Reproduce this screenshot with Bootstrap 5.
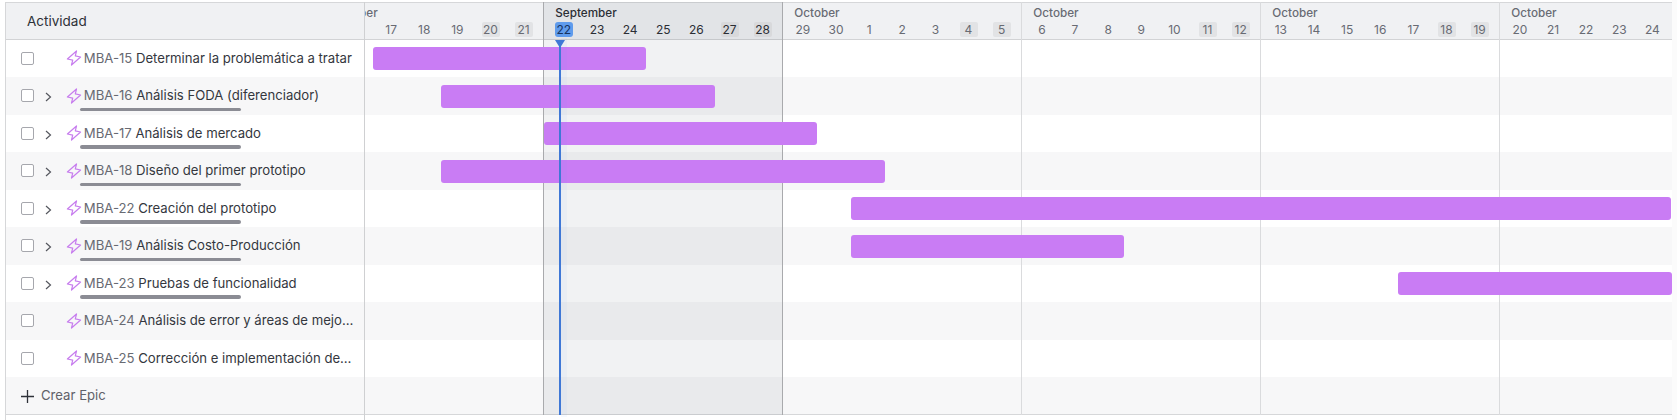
<!DOCTYPE html>
<html lang="es">
<head>
  <meta charset="UTF-8" />
  <meta name="viewport" content="width=device-width, initial-scale=1.0" />
  <title>Cronograma</title>
  <link href="https://cdn.jsdelivr.net/npm/bootstrap@5.3.0/dist/css/bootstrap.min.css" rel="stylesheet" />
  <style>
    body { background: #fff; font-family: "Inter", "Liberation Sans", sans-serif; overflow: hidden; }
    .gantt { margin: 2px 0 0 5px; width: 1667px; height: 418px; overflow: hidden; }
    .gantt-side { width: 360px; flex: none; border-left: 1px solid #d6d7d9; border-right: 1px solid #cfd0d2; }
    .gantt-head { height: 37.5px; background: #f0f1f3; border-top: 1px solid #d6d7d9; border-bottom: 1px solid #d2d3d5; }
    .side-title { font-size: 13.5px; color: #2e3138; padding-left: 21px; font-weight: 400; }
    .gantt-row { height: 37.5px; position: relative; }
    .gantt-row svg { flex: none; }
    .gantt-row.alt { background: #f7f7f8; }
    .gantt-row.last { border-bottom: 1px solid #d6d7d9; }
    .task-check.form-check-input { width: 13px; height: 13px; margin: 0 0 0 15px; flex: none; border: 1.5px solid #a6a7ad; border-radius: 2px; background-color: #fff; }
    .task-toggle { width: 32px; flex: none; padding-left: 11px; }
    .task-label { font-size: 13.15px; color: #34373e; padding: 1px 10px 0 1.8px; }
    .task-key { color: #686a72; }
    .task-progress { position: absolute; left: 74px; width: 161px; bottom: 3.5px; height: 3.5px; border-radius: 2px; background: #8b8c94; }
    .add-epic { font-size: 13.15px; color: #5f6169; padding: 2px 0 0 15px; gap: 7px; }
    .gantt-chart { flex: 1 1 0; min-width: 0; overflow: hidden; }
    .gantt-track { position: relative; width: 1434px; margin-left: -60.7px; }
    .week-head { width: 239px; flex: none; position: relative; z-index: 2; padding-left: 4px; color: #686b73; }
    .week-head.now { color: #2b2e35; }
    .week-month { font-size: 11.7px; font-weight: 500; line-height: 15px; padding: 2.5px 0 0 8px; white-space: nowrap; }
    .week-days { display: flex; margin-top: 1px; }
    .day-cell { width: 33.14px; flex: none; display: flex; justify-content: center; font-size: 12px; line-height: 15px; }
    .day-num { min-width: 18px; text-align: center; border-radius: 2px; }
    .day-num.off { background: #e2e3e5; }
    .now .day-num.off { background: #d8d9db; }
    .day-num.today { background: #5f9bec; color: #16325f; border-radius: 3px; }
    .week-lines { position: absolute; inset: 0; z-index: 1; pointer-events: none; }
    .week-line { width: 239px; flex: none; border-left: 1px solid #dadbdd; }
    .week-line.now { background: rgba(9, 30, 50, .06); border-left-color: #a9aaad; }
    .week-line.now + .week-line { border-left-color: #a9aaad; }
    .gantt-bar { position: absolute; top: 7.5px; height: 23px; border-radius: 3px; background: #c97cf4; z-index: 2; }
    .today-line { position: absolute; top: 37.5px; bottom: 0; left: 255px; width: 2px; background: #3f78d6; box-shadow: 4px 0 0 2px rgba(90, 160, 255, .05); z-index: 3; }
    .today-line::before { content: ""; position: absolute; top: 0; left: -4px; border: 5px solid transparent; border-top: 8px solid #3f78d6; border-bottom: 0; }
    .edge-strip { position: fixed; top: 0; right: 0; bottom: 0; width: 5px; background: #fbfbfb; }
  </style>
</head>
<body>
  <div class="gantt d-flex">
    <!-- Lista de actividades -->
    <div class="gantt-side">
      <div class="gantt-head d-flex align-items-center"><span class="side-title">Actividad</span></div>

      <div class="gantt-row d-flex align-items-center">
        <input class="form-check-input task-check" type="checkbox" />
        <span class="task-toggle"></span>
        <svg width="16" height="16" viewBox="0 0 16 16" fill="none" stroke="#c77dee" stroke-width="1.2" stroke-linejoin="round"><path d="M10.5 1 9.3 5.9 14.6 7 5.5 15 6.7 10.1 1.4 9Z"/></svg>
        <span class="task-label text-truncate"><span class="task-key">MBA-15</span> Determinar la problemática a tratar</span>
      </div>

      <div class="gantt-row alt d-flex align-items-center">
        <input class="form-check-input task-check" type="checkbox" />
        <span class="task-toggle"><svg width="7" height="10" viewBox="0 0 7 10" fill="none" stroke="#55575e" stroke-width="1.2"><path d="M1 1l4.5 4L1 9"/></svg></span>
        <svg width="16" height="16" viewBox="0 0 16 16" fill="none" stroke="#c77dee" stroke-width="1.2" stroke-linejoin="round"><path d="M10.5 1 9.3 5.9 14.6 7 5.5 15 6.7 10.1 1.4 9Z"/></svg>
        <span class="task-label text-truncate"><span class="task-key">MBA-16</span> Análisis FODA (diferenciador)</span>
        <span class="task-progress"></span>
      </div>

      <div class="gantt-row d-flex align-items-center">
        <input class="form-check-input task-check" type="checkbox" />
        <span class="task-toggle"><svg width="7" height="10" viewBox="0 0 7 10" fill="none" stroke="#55575e" stroke-width="1.2"><path d="M1 1l4.5 4L1 9"/></svg></span>
        <svg width="16" height="16" viewBox="0 0 16 16" fill="none" stroke="#c77dee" stroke-width="1.2" stroke-linejoin="round"><path d="M10.5 1 9.3 5.9 14.6 7 5.5 15 6.7 10.1 1.4 9Z"/></svg>
        <span class="task-label text-truncate"><span class="task-key">MBA-17</span> Análisis de mercado</span>
        <span class="task-progress"></span>
      </div>

      <div class="gantt-row alt d-flex align-items-center">
        <input class="form-check-input task-check" type="checkbox" />
        <span class="task-toggle"><svg width="7" height="10" viewBox="0 0 7 10" fill="none" stroke="#55575e" stroke-width="1.2"><path d="M1 1l4.5 4L1 9"/></svg></span>
        <svg width="16" height="16" viewBox="0 0 16 16" fill="none" stroke="#c77dee" stroke-width="1.2" stroke-linejoin="round"><path d="M10.5 1 9.3 5.9 14.6 7 5.5 15 6.7 10.1 1.4 9Z"/></svg>
        <span class="task-label text-truncate"><span class="task-key">MBA-18</span> Diseño del primer prototipo</span>
        <span class="task-progress"></span>
      </div>

      <div class="gantt-row d-flex align-items-center">
        <input class="form-check-input task-check" type="checkbox" />
        <span class="task-toggle"><svg width="7" height="10" viewBox="0 0 7 10" fill="none" stroke="#55575e" stroke-width="1.2"><path d="M1 1l4.5 4L1 9"/></svg></span>
        <svg width="16" height="16" viewBox="0 0 16 16" fill="none" stroke="#c77dee" stroke-width="1.2" stroke-linejoin="round"><path d="M10.5 1 9.3 5.9 14.6 7 5.5 15 6.7 10.1 1.4 9Z"/></svg>
        <span class="task-label text-truncate"><span class="task-key">MBA-22</span> Creación del prototipo</span>
        <span class="task-progress"></span>
      </div>

      <div class="gantt-row alt d-flex align-items-center">
        <input class="form-check-input task-check" type="checkbox" />
        <span class="task-toggle"><svg width="7" height="10" viewBox="0 0 7 10" fill="none" stroke="#55575e" stroke-width="1.2"><path d="M1 1l4.5 4L1 9"/></svg></span>
        <svg width="16" height="16" viewBox="0 0 16 16" fill="none" stroke="#c77dee" stroke-width="1.2" stroke-linejoin="round"><path d="M10.5 1 9.3 5.9 14.6 7 5.5 15 6.7 10.1 1.4 9Z"/></svg>
        <span class="task-label text-truncate"><span class="task-key">MBA-19</span> Análisis Costo-Producción</span>
        <span class="task-progress"></span>
      </div>

      <div class="gantt-row d-flex align-items-center">
        <input class="form-check-input task-check" type="checkbox" />
        <span class="task-toggle"><svg width="7" height="10" viewBox="0 0 7 10" fill="none" stroke="#55575e" stroke-width="1.2"><path d="M1 1l4.5 4L1 9"/></svg></span>
        <svg width="16" height="16" viewBox="0 0 16 16" fill="none" stroke="#c77dee" stroke-width="1.2" stroke-linejoin="round"><path d="M10.5 1 9.3 5.9 14.6 7 5.5 15 6.7 10.1 1.4 9Z"/></svg>
        <span class="task-label text-truncate"><span class="task-key">MBA-23</span> Pruebas de funcionalidad</span>
        <span class="task-progress"></span>
      </div>

      <div class="gantt-row alt d-flex align-items-center">
        <input class="form-check-input task-check" type="checkbox" />
        <span class="task-toggle"></span>
        <svg width="16" height="16" viewBox="0 0 16 16" fill="none" stroke="#c77dee" stroke-width="1.2" stroke-linejoin="round"><path d="M10.5 1 9.3 5.9 14.6 7 5.5 15 6.7 10.1 1.4 9Z"/></svg>
        <span class="task-label text-truncate"><span class="task-key">MBA-24</span> Análisis de error y áreas de mejora</span>
      </div>

      <div class="gantt-row d-flex align-items-center">
        <input class="form-check-input task-check" type="checkbox" />
        <span class="task-toggle"></span>
        <svg width="16" height="16" viewBox="0 0 16 16" fill="none" stroke="#c77dee" stroke-width="1.2" stroke-linejoin="round"><path d="M10.5 1 9.3 5.9 14.6 7 5.5 15 6.7 10.1 1.4 9Z"/></svg>
        <span class="task-label text-truncate"><span class="task-key">MBA-25</span> Corrección e implementación de mejoras</span>
      </div>

      <div class="gantt-row alt last d-flex align-items-center add-epic">
        <svg width="13" height="13" viewBox="0 0 13 13" stroke="#2e3138" stroke-width="1.3"><path d="M6.5 0v13M0 6.5h13"/></svg>
        <span>Crear Epic</span>
      </div>
    </div>

    <!-- Cronograma -->
    <div class="gantt-chart">
      <div class="gantt-track">
        <div class="gantt-head d-flex">
          <div class="week-head">
            <div class="week-month">September</div>
            <div class="week-days"><span class="day-cell"></span><span class="day-cell"><span class="day-num">16</span></span><span class="day-cell"><span class="day-num">17</span></span><span class="day-cell"><span class="day-num">18</span></span><span class="day-cell"><span class="day-num">19</span></span><span class="day-cell"><span class="day-num off">20</span></span><span class="day-cell"><span class="day-num off">21</span></span></div>
          </div>
          <div class="week-head now">
            <div class="week-month">September</div>
            <div class="week-days"><span class="day-cell"><span class="day-num today">22</span></span><span class="day-cell"><span class="day-num">23</span></span><span class="day-cell"><span class="day-num">24</span></span><span class="day-cell"><span class="day-num">25</span></span><span class="day-cell"><span class="day-num">26</span></span><span class="day-cell"><span class="day-num off">27</span></span><span class="day-cell"><span class="day-num off">28</span></span></div>
          </div>
          <div class="week-head">
            <div class="week-month">October</div>
            <div class="week-days"><span class="day-cell"><span class="day-num">29</span></span><span class="day-cell"><span class="day-num">30</span></span><span class="day-cell"><span class="day-num">1</span></span><span class="day-cell"><span class="day-num">2</span></span><span class="day-cell"><span class="day-num">3</span></span><span class="day-cell"><span class="day-num off">4</span></span><span class="day-cell"><span class="day-num off">5</span></span></div>
          </div>
          <div class="week-head">
            <div class="week-month">October</div>
            <div class="week-days"><span class="day-cell"><span class="day-num">6</span></span><span class="day-cell"><span class="day-num">7</span></span><span class="day-cell"><span class="day-num">8</span></span><span class="day-cell"><span class="day-num">9</span></span><span class="day-cell"><span class="day-num">10</span></span><span class="day-cell"><span class="day-num off">11</span></span><span class="day-cell"><span class="day-num off">12</span></span></div>
          </div>
          <div class="week-head">
            <div class="week-month">October</div>
            <div class="week-days"><span class="day-cell"><span class="day-num">13</span></span><span class="day-cell"><span class="day-num">14</span></span><span class="day-cell"><span class="day-num">15</span></span><span class="day-cell"><span class="day-num">16</span></span><span class="day-cell"><span class="day-num">17</span></span><span class="day-cell"><span class="day-num off">18</span></span><span class="day-cell"><span class="day-num off">19</span></span></div>
          </div>
          <div class="week-head">
            <div class="week-month">October</div>
            <div class="week-days"><span class="day-cell"><span class="day-num">20</span></span><span class="day-cell"><span class="day-num">21</span></span><span class="day-cell"><span class="day-num">22</span></span><span class="day-cell"><span class="day-num">23</span></span><span class="day-cell"><span class="day-num">24</span></span><span class="day-cell"><span class="day-num">25</span></span><span class="day-cell"><span class="day-num">26</span></span></div>
          </div>
        </div>

        <div class="gantt-row"><div class="gantt-bar" style="left:68.7px;width:273px"></div></div>
        <div class="gantt-row alt"><div class="gantt-bar" style="left:136.7px;width:274px"></div></div>
        <div class="gantt-row"><div class="gantt-bar" style="left:239.7px;width:273px"></div></div>
        <div class="gantt-row alt"><div class="gantt-bar" style="left:136.7px;width:444px"></div></div>
        <div class="gantt-row"><div class="gantt-bar" style="left:546.7px;width:820px"></div></div>
        <div class="gantt-row alt"><div class="gantt-bar" style="left:546.7px;width:273px"></div></div>
        <div class="gantt-row"><div class="gantt-bar" style="left:1093.7px;width:274px"></div></div>
        <div class="gantt-row alt"></div>
        <div class="gantt-row"></div>
        <div class="gantt-row alt last"></div>

        <div class="week-lines d-flex">
          <div class="week-line"></div>
          <div class="week-line now"></div>
          <div class="week-line"></div>
          <div class="week-line"></div>
          <div class="week-line"></div>
          <div class="week-line"></div>
        </div>
        <div class="today-line"></div>
      </div>
    </div>
  </div>
  <div class="edge-strip"></div>

  <script src="https://cdn.jsdelivr.net/npm/bootstrap@5.3.0/dist/js/bootstrap.bundle.min.js"></script>
</body>
</html>
